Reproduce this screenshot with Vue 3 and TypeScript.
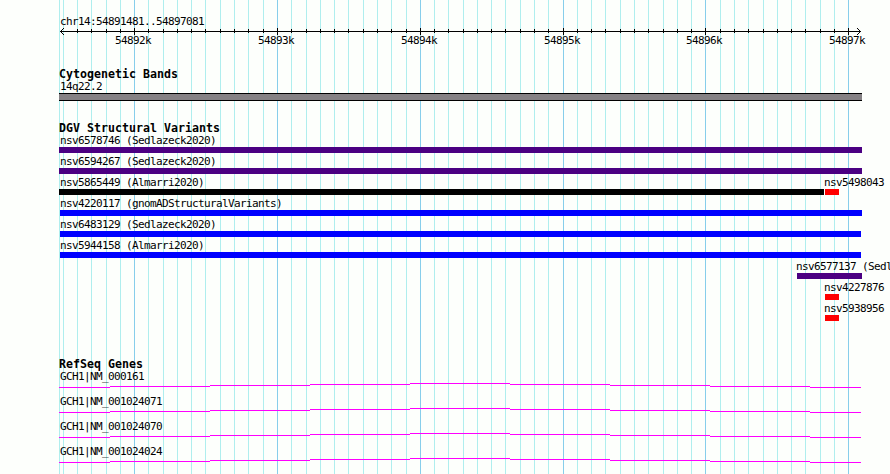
<script setup lang="ts">
import { computed } from 'vue'

interface Variant {
  name: string
  source?: string
  start: number
  end: number
  color: string
}

const PANEL_WIDTH = 890
const PANEL_HEIGHT = 474
const LABEL_MIN = 60

const region = 'chr14:54891481..54897081'

const minorLines = [
  59, 63, 77, 91, 106, 120, 148, 163, 177, 191, 205, 220, 234, 248, 263,
  291, 306, 320, 334, 348, 363, 377, 391, 406, 434, 448, 463, 477, 491, 505,
  520, 534, 548, 577, 591, 605, 620, 634, 648, 663, 677, 691,
  720, 734, 748, 763, 777, 791, 805, 820, 834,
]
const majorLines = [
  { x: 134, label: '54892k' },
  { x: 277, label: '54893k' },
  { x: 420, label: '54894k' },
  { x: 563, label: '54895k' },
  { x: 705, label: '54896k' },
  { x: 848, label: '54897k' },
]

const indigo = '#4b0082'
const blue = '#0000ff'
const red = '#ff0000'

const variantRows: Variant[][] = [
  [{ name: 'nsv6578746', source: 'Sedlazeck2020', start: 59, end: 862, color: indigo }],
  [{ name: 'nsv6594267', source: 'Sedlazeck2020', start: 59, end: 862, color: indigo }],
  [
    { name: 'nsv5865449', source: 'Almarri2020', start: 59, end: 824, color: '#000000' },
    { name: 'nsv5498043', start: 825, end: 839, color: red },
  ],
  [{ name: 'nsv4220117', source: 'gnomADStructuralVariants', start: 60, end: 862, color: blue }],
  [{ name: 'nsv6483129', source: 'Sedlazeck2020', start: 60, end: 861, color: blue }],
  [{ name: 'nsv5944158', source: 'Almarri2020', start: 60, end: 861, color: blue }],
  [{ name: 'nsv6577137', source: 'Sedlazeck2020', start: 797, end: 862, color: indigo }],
  [{ name: 'nsv4227876', start: 825, end: 839, color: red }],
  [{ name: 'nsv5938956', start: 825, end: 839, color: red }],
]

const genes = ['GCH1|NM_000161', 'GCH1|NM_001024071', 'GCH1|NM_001024070', 'GCH1|NM_001024024']

// the intron rises one pixel per step up to the middle and falls again
const intronEdges = [59, 110, 210, 310, 410, 510, 610, 710, 810, 861]
const intronSteps = intronEdges.slice(0, -1).map((x, index) => ({
  x,
  width: intronEdges[index + 1] - x,
  y: Math.abs(4 - index),
}))

const ticks = computed(() => minorLines.filter((x) => x > LABEL_MIN + 3))

function labelText(item: Variant) {
  return item.source ? `${item.name} (${item.source})` : item.name
}

function labelStyle(item: Variant) {
  return { marginLeft: `${Math.max(LABEL_MIN, item.start - 1)}px` }
}

function barStyle(item: Variant) {
  return {
    marginLeft: `${item.start}px`,
    width: `${item.end - item.start}px`,
    background: item.color,
  }
}
</script>

<template>
  <div class="panel">
    <svg class="grid-lines" :width="PANEL_WIDTH" :height="PANEL_HEIGHT" aria-hidden="true">
      <rect v-for="x in minorLines" :key="x" class="minor" :x="x" y="0" width="1" :height="PANEL_HEIGHT" />
      <rect v-for="line in majorLines" :key="line.x" class="major" :x="line.x" y="0" width="1" :height="PANEL_HEIGHT" />
    </svg>

    <div class="tracks">
      <svg class="ruler" :width="PANEL_WIDTH" height="67" shape-rendering="crispEdges">
        <text x="60" y="25">{{ region }}</text>
        <rect x="60" y="31" width="801" height="1" />
        <g v-for="i in 3" :key="i">
          <rect :x="60 + i" :y="31 - i" width="1" height="1" />
          <rect :x="60 + i" :y="31 + i" width="1" height="1" />
          <rect :x="860 - i" :y="31 - i" width="1" height="1" />
          <rect :x="860 - i" :y="31 + i" width="1" height="1" />
        </g>
        <rect v-for="x in ticks" :key="x" :x="x" y="29" width="1" height="4" />
        <g v-for="line in majorLines" :key="line.x">
          <rect :x="line.x" y="28" width="1" height="7" />
          <text :x="line.x - 19" y="44">{{ line.label }}</text>
        </g>
      </svg>

      <section class="track">
        <h2 class="title">Cytogenetic Bands</h2>
        <div class="label band-label">14q22.2</div>
        <div class="band" />
      </section>

      <section class="track variants">
        <h2 class="title">DGV Structural Variants</h2>
        <div v-for="(row, index) in variantRows" :key="index" class="row">
          <div v-for="item in row" :key="item.name" class="feature">
            <div class="label" :style="labelStyle(item)">{{ labelText(item) }}</div>
            <div class="bar" :style="barStyle(item)" />
          </div>
        </div>
      </section>

      <section class="track genes">
        <h2 class="title">RefSeq Genes</h2>
        <div v-for="gene in genes" :key="gene" class="gene">
          <div class="label gene-label">{{ gene }}</div>
          <svg class="intron" :width="PANEL_WIDTH" height="5" aria-hidden="true">
            <rect v-for="step in intronSteps" :key="step.x" :x="step.x" :y="step.y" :width="step.width" height="1" />
          </svg>
        </div>
      </section>
    </div>
  </div>
</template>

<style scoped>
.panel {
  position: relative;
  width: 890px;
  height: 474px;
  overflow: hidden;
  background: #fdfffc;
  color: #000000;
  font-family: 'DejaVu Sans Mono', 'Liberation Mono', monospace;
  font-size: 11px;
  letter-spacing: -0.622px;
}

.grid-lines {
  position: absolute;
  inset: 0;
}

.minor {
  fill: #afeeee;
}

.major {
  fill: #87ceeb;
}

.tracks {
  position: relative;
  display: flex;
  flex-direction: column;
}

.ruler {
  display: block;
}

.title {
  height: 12px;
  margin: 0 0 0 59px;
  font-size: 11.6px;
  font-weight: 700;
  line-height: 15px;
  letter-spacing: 0.016px;
  white-space: nowrap;
}

.label {
  height: 14px;
  line-height: 16px;
  white-space: nowrap;
}

.band-label,
.gene-label {
  margin-left: 60px;
}

.band {
  box-sizing: border-box;
  width: 803px;
  height: 8px;
  margin-left: 59px;
  background: #858184;
  border-top: 1px solid #000000;
  border-bottom: 1px solid #000000;
}

.variants {
  margin-top: 20px;
}

.row {
  display: grid;
  height: 21px;
}

.feature {
  grid-area: 1 / 1;
  min-width: 0;
}

.bar {
  height: 6px;
}

.genes {
  margin-top: 35px;
}

.gene {
  height: 25px;
}

.intron {
  display: block;
  fill: #ff00ff;
}
</style>
